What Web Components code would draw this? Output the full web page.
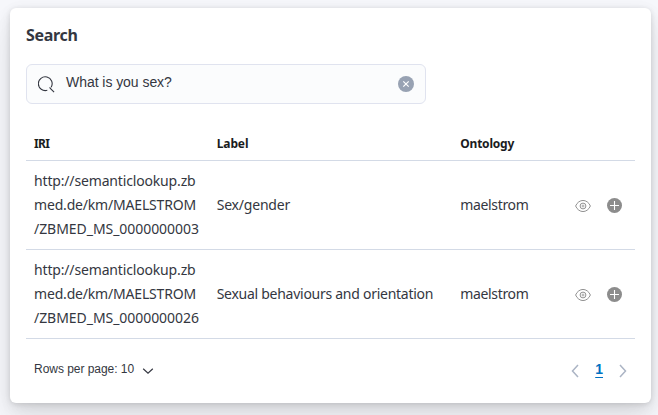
<!DOCTYPE html>
<html lang="en"><head><meta charset="utf-8"><title>Search</title>
<style>
html,body{margin:0;height:100%}
body{background:#f6f7fb;font:14px/24px "Noto Sans",sans-serif;color:#343741;overflow:hidden;padding:8px 7px 12px 10px;box-sizing:border-box}
</style></head><body>
<search-panel></search-panel>
<script>
const define=(name,html)=>customElements.define(name,class extends HTMLElement{
  constructor(){super();this.attachShadow({mode:'open'}).innerHTML=html}
});
define('ui-text',`<style>:host{display:block;white-space:nowrap}</style><slot></slot>`);
define('eye-icon',`<style>:host{display:block;width:16px;height:16px}svg{display:block}</style>
<svg width="16" height="16" viewBox="0 0 16 16" fill="none" stroke="#929292"><path d="M.6 8C3.8 .6 12.2 .6 15.4 8C12.2 15.4 3.8 15.4 .6 8Z"/><circle cx="8" cy="8" r="2.9"/><circle cx="8" cy="8" r="1" stroke-width=".8"/></svg>`);
define('add-icon',`<style>:host{display:block;width:16px;height:16px}svg{display:block}</style>
<svg width="16" height="16" viewBox="0 0 16 16"><circle cx="7.5" cy="7.5" r="7.5" fill="#8c8c8c"/><path d="M7.5 3v9M3 7.5h9" stroke="#fff" stroke-width="1.1"/></svg>`);
define('search-field',`<style>
:host{display:flex;align-items:center;box-sizing:border-box;width:400px;height:40px;padding:0 11px 0 12px;border:1px solid #e0e3ef;border-radius:6px;background:#fbfcfd;font:14px/20px "Liberation Sans",Arial,sans-serif}
svg{display:block}.q{flex:1;margin-left:11px;padding-bottom:5px;letter-spacing:-.05px}.mag{margin-left:-1px}</style>
<svg class="mag" width="17" height="17" viewBox="0 0 17 17" fill="none" stroke="#343741" stroke-width="1.1"><path d="M9.3 14.3A6.9 6.9 0 1 1 13.2 11.2M11.7 11.2L12.3 12.4L16.1 16.2"/></svg>
<span class="q"><slot></slot></span>
<svg width="16" height="16" viewBox="0 0 16 16"><circle cx="8" cy="8" r="8" fill="#98a2b3"/><path d="M5.3 5.3l5.4 5.4M10.7 5.3l-5.4 5.4" stroke="#fff" stroke-width="1.2"/></svg>`);
define('table-row',`<style>
:host{display:grid;grid-template-columns:30% 40% 1fr 67px;align-items:center;border-bottom:1px solid #d3dae6;box-sizing:border-box;height:89px}
:host([head]){height:33px;font-weight:700;font-size:12px;color:#1a1c21;line-height:18px}
div{padding-left:8px}.acts{display:flex;gap:16px;padding:2px 0 0;margin-left:7px}</style>
<div><slot name="iri"></slot></div><div><slot name="label"></slot></div><div><slot name="ontology"></slot></div><div class="acts"><slot name="actions"></slot></div>`);
define('table-footer',`<style>
:host{display:flex;justify-content:space-between;align-items:center;height:24px;margin-top:19px;padding:0 7px 0 8px;font:12px/18px "Liberation Sans",Arial,sans-serif}
div{display:flex;align-items:center}svg{display:block}.rows{gap:8px}.rows span{padding-bottom:3px;letter-spacing:-.04px}.rows svg{margin-top:1px}
.page{gap:15px}.page span{font-size:14px;line-height:18px;font-weight:700;color:#0071c2;height:20px;text-decoration:underline;text-decoration-thickness:1px;text-underline-offset:3px}.page svg{margin-top:1px}</style>
<div class="rows"><span>Rows per page: 10</span><svg width="12" height="8" viewBox="0 0 12 8" fill="none" stroke="#343741" stroke-width="1.2"><path d="M1.2 1.8L6 6.1l4.8-4.3"/></svg></div>
<div class="page"><svg width="10" height="14" viewBox="0 0 10 14" fill="none" stroke="#abb4c4" stroke-width="1.5"><path d="M8 1L2.5 7l5.5 6"/></svg><span>1</span><svg width="10" height="14" viewBox="0 0 10 14" fill="none" stroke="#abb4c4" stroke-width="1.5"><path d="M2 1L7.5 7l-5.5 6"/></svg></div>`);
define('search-panel',`<style>
:host{display:block;box-sizing:border-box;width:641px;height:395px;padding:16px;background:#fff;border-radius:6px;box-shadow:0 1px 5px rgba(0,0,0,.1),0 3.6px 13px rgba(0,0,0,.07),0 8.4px 23px rgba(0,0,0,.06),0 23px 35px rgba(0,0,0,.05)}
h2{margin:-1px 0 17px;font-size:16px;line-height:24px;height:24px;letter-spacing:-.32px}
.table{margin-top:24px}
</style>
<h2>Search</h2>
<search-field>What is you sex?</search-field>
<div class="table">
<table-row head><ui-text slot="iri" style="letter-spacing:-.6px">IRI</ui-text><ui-text slot="label" style="letter-spacing:-.1px">Label</ui-text><ui-text slot="ontology" style="letter-spacing:-.22px">Ontology</ui-text></table-row>
${[['Sex/gender','-.2px','03'],['Sexual behaviours and orientation','-.27px','26']].map(r=>`<table-row>
<ui-text slot="iri" style="letter-spacing:-.16px">http://semanticlookup.zb</ui-text><ui-text slot="iri" style="letter-spacing:-.18px">med.de/km/MAELSTROM</ui-text><ui-text slot="iri" style="letter-spacing:-.05px">/ZBMED_MS_00000000${r[2]}</ui-text>
<ui-text slot="label" style="letter-spacing:${r[1]}">${r[0]}</ui-text><ui-text slot="ontology" style="letter-spacing:-.34px">maelstrom</ui-text>
<eye-icon slot="actions"></eye-icon><add-icon slot="actions"></add-icon></table-row>`).join('')}
</div>
<table-footer></table-footer>`);
</script></body></html>
